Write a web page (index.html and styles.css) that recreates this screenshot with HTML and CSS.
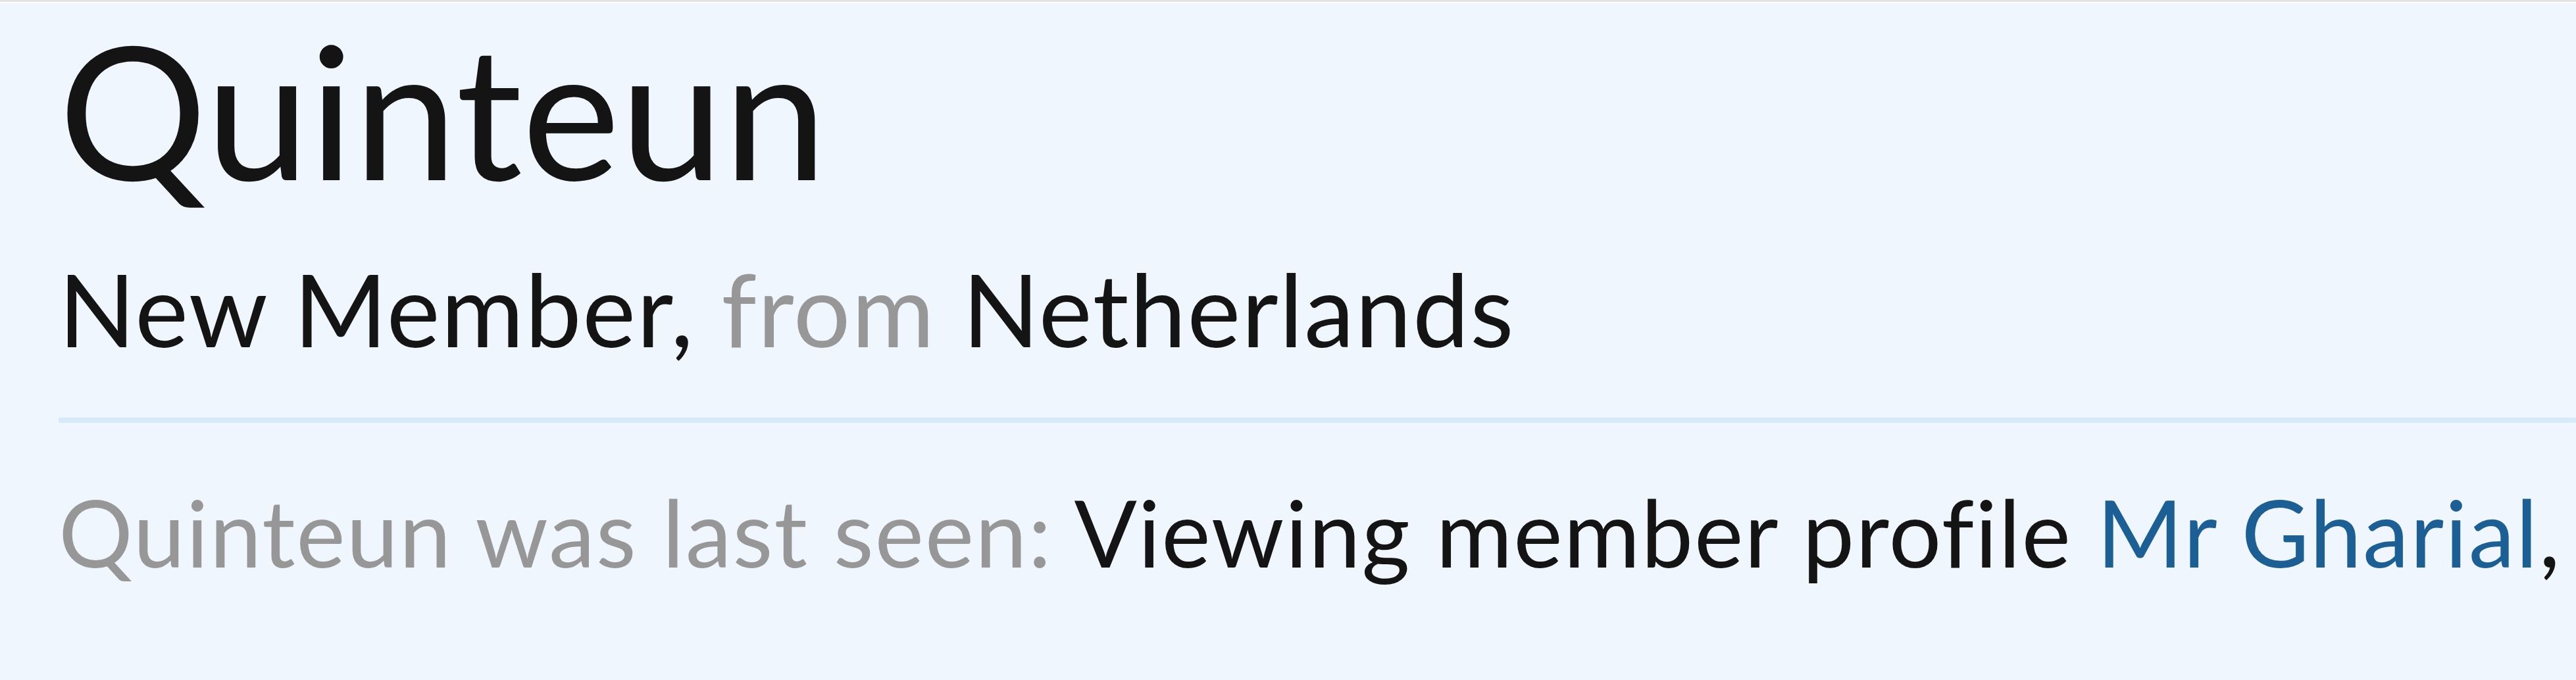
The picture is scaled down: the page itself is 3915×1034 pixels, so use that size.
FILE: index.html
```html
<!DOCTYPE html>
<html>
<head>
    <title>Quinteun - Member Profile</title>
    <link rel="stylesheet" href="styles.css">
</head>
<body>
    <div class="profile">
        <div class="member-header">
            <h1 class="username">Quinteun</h1>
            <p class="user-title">New Member, <span class="muted">from</span> Netherlands</p>
        </div>
        <div class="member-info">
            <p class="last-seen"><span class="muted">Quinteun was last seen:</span> Viewing member profile <a href="#">Mr Gharial</a>,</p>
        </div>
    </div>
</body>
</html>
```

FILE: styles.css
```css
* { margin: 0; padding: 0; box-sizing: border-box; }
html, body { height: 100%; }
body { background: #eff6fd; border-top: 3px solid #e3e3e3; font-family: Lato, "Noto Sans", sans-serif; color: #141414; overflow: hidden; }
.profile { border-top: 2px solid #fff; padding-left: 89px; height: 100%; }
.member-header { border-bottom: 8px solid #d6eaf9; padding-top: 19px; padding-bottom: 89px; }
.username { font-size: 282px; font-weight: normal; line-height: 1; }
.user-title { font-size: 153px; line-height: 1; margin-top: 87px; letter-spacing: 1.7px; }
.muted { color: #979797; }
.member-info { padding-top: 95px; }
.last-seen { font-size: 141px; line-height: 1; white-space: nowrap; letter-spacing: 1.8px; }
.last-seen a { color: #1b5f95; text-decoration: none; }
```
